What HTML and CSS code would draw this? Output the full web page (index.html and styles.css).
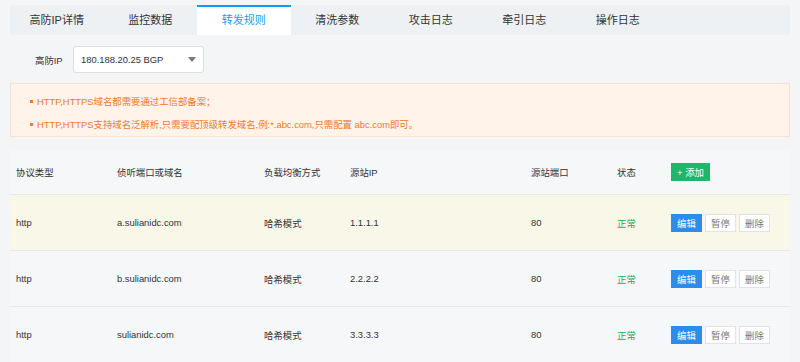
FILE: index.html
```html
<!DOCTYPE html>
<html>

<head>
	<meta http-equiv="Content-Type" content="text/html; charset=utf-8" />
	<title>转发规则</title>
	<link rel="stylesheet" href="styles.css">
</head>

<body>
	<nav class="tabs">
		<a href="#">高防IP详情</a>
		<a href="#">监控数据</a>
		<a href="#" class="active">转发规则</a>
		<a href="#">清洗参数</a>
		<a href="#">攻击日志</a>
		<a href="#">牵引日志</a>
		<a href="#">操作日志</a>
	</nav>
	<div class="ip-row">
		<label>高防IP</label>
		<div class="select">
			<span>180.188.20.25 BGP</span>
			<i class="caret"></i>
		</div>
	</div>
	<ul class="notice">
		<li>HTTP,HTTPS域名都需要通过工信部备案；</li>
		<li>HTTP,HTTPS支持域名泛解析,只需要配顶级转发域名,例:*.abc.com,只需配置 abc.com即可。</li>
	</ul>
	<div class="rules">
		<div class="row head">
			<span>协议类型</span>
			<span>侦听端口或域名</span>
			<span>负载均衡方式</span>
			<span>源站IP</span>
			<span>源站端口</span>
			<span>状态</span>
			<span><button class="btn add">+ 添加</button></span>
		</div>
		<div class="row hover">
			<span>http</span>
			<span>a.sulianidc.com</span>
			<span>哈希模式</span>
			<span>1.1.1.1</span>
			<span>80</span>
			<span class="ok">正常</span>
			<span class="ops"><button class="btn edit">编辑</button><button class="btn">暂停</button><button class="btn">删除</button></span>
		</div>
		<div class="row">
			<span>http</span>
			<span>b.sulianidc.com</span>
			<span>哈希模式</span>
			<span>2.2.2.2</span>
			<span>80</span>
			<span class="ok">正常</span>
			<span class="ops"><button class="btn edit">编辑</button><button class="btn">暂停</button><button class="btn">删除</button></span>
		</div>
		<div class="row">
			<span>http</span>
			<span>sulianidc.com</span>
			<span>哈希模式</span>
			<span>3.3.3.3</span>
			<span>80</span>
			<span class="ok">正常</span>
			<span class="ops"><button class="btn edit">编辑</button><button class="btn">暂停</button><button class="btn">删除</button></span>
		</div>
	</div>
</body>

</html>
```

FILE: styles.css
```css
body {
	font-family: "Liberation Sans", "Noto Sans CJK SC", sans-serif;
	font-size: 9.4px;
	color: #333;
	background-color: #f4f5f7;
	margin: 0;
	padding: 5px 10px 0;
}

.tabs {
	display: flex;
	height: 30px;
	background-color: #eef1f4;
}

.tabs a {
	width: 93.5px;
	box-sizing: border-box;
	border-top: 2px solid transparent;
	text-align: center;
	line-height: 27px;
	font-size: 11px;
	color: #333;
	text-decoration: none;
}

.tabs a.active {
	background-color: #fff;
	border-top-color: #0c9cff;
	color: #1a9bfc;
}

.ip-row {
	display: flex;
	align-items: center;
	margin-top: 11px;
	padding-left: 25px;
}

.ip-row label {
	width: 38px;
}

.select {
	display: flex;
	align-items: center;
	justify-content: space-between;
	box-sizing: border-box;
	width: 131px;
	height: 27px;
	padding: 0 7px 0 7px;
	background-color: #fff;
	border: 1px solid #dcdee2;
	border-radius: 3px;
}

.caret {
	width: 0;
	height: 0;
	border-left: 4px solid transparent;
	border-right: 4px solid transparent;
	border-top: 5px solid #777;
}

.notice {
	list-style: none;
	margin: 10px 0 0;
	padding: 6px 0 6px 26px;
	height: 54px;
	box-sizing: border-box;
	background-color: #fff3ea;
	border: 1px solid #fde0cc;
	color: #f37a2a;
}

.notice li {
	position: relative;
	line-height: 23px;
}

.notice li:before {
	content: "";
	position: absolute;
	left: -7px;
	top: 10px;
	width: 3px;
	height: 3px;
	background-color: #f37a2a;
}

.rules {
	margin-top: 13px;
	background-color: #f6f7f9;
}

.row {
	display: grid;
	grid-template-columns: 101px 147px 86px 181px 86px 54px 1fr;
	align-items: center;
	box-sizing: border-box;
	height: 56px;
	border-top: 1px solid #e6e8ec;
}

.row.head {
	height: 44px;
	border-top: none;
}

.row.hover {
	background-color: #f8f7e8;
}

.row span {
	padding-left: 6px;
}

.ok {
	color: #2aa657;
}

.ops {
	display: flex;
	gap: 3px;
}

.btn {
	font-family: inherit;
	font-size: 9.4px;
	height: 18px;
	width: 31px;
	padding: 0;
	margin: 0;
	color: #777;
	background-color: #fff;
	border: 1px solid #e2e3e6;
	border-radius: 0;
}

.btn.edit {
	color: #fff;
	background-color: #2b8cee;
	border-color: #2b8cee;
}

.btn.add {
	width: 39px;
	height: 18px;
	color: #fff;
	background-color: #1fb56b;
	border-color: #1fb56b;
}
```
